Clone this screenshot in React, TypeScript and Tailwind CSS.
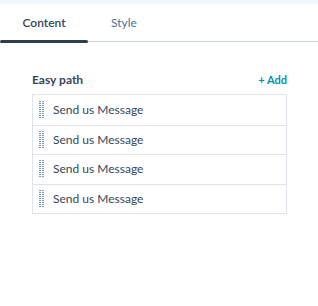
import React from "react";

const Handle = () => (
  <svg width="5" height="18" viewBox="0 0 5 18" className="shrink-0">
    {Array.from({ length: 9 }).map((_, i) => (
      <g key={i}>
        <rect x="0" y={i * 2} width="2" height="1" fill="#7c98b6" />
        <rect x="3" y={i * 2} width="2" height="1" fill="#7c98b6" />
      </g>
    ))}
  </svg>
);

export default function App() {
  const rows = ["Send us Message", "Send us Message", "Send us Message", "Send us Message"];
  return (
    <div className="w-[318px] h-[306px] bg-white overflow-hidden" style={{ fontFamily: "Lato, 'Noto Sans', sans-serif" }}>
      <div className="h-[4px] bg-[#f5f8fa]" />
      <div className="flex h-[38px] border-b border-[#cbd6e2] relative">
        <div className="w-[88px] flex items-center justify-center text-[12px] font-semibold text-[#33475b] relative pt-[1px]">
          Content
          <div className="absolute left-0 right-0 bottom-[-2px] h-[3px] bg-[#2d3e50] rounded-full" />
        </div>
        <div className="w-[72px] flex items-center justify-center text-[12px] text-[#516f90] pt-[1px]">Style</div>
      </div>
      <div className="pl-[32px] pt-[29px]">
        <div className="flex items-center justify-between w-[255px] h-[18px] mb-[5px]">
          <span className="text-[12px] font-bold text-[#33475b]">Easy path</span>
          <span className="text-[11px] font-bold text-[#0091ae]">+ Add</span>
        </div>
        <div className="w-[255px] border border-[#dfe3eb]">
          {rows.map((r, i) => (
            <div
              key={i}
              className={`flex items-center h-[29.5px] pl-[6px] gap-[9px] ${i > 0 ? "border-t border-[#dfe3eb]" : ""}`}
            >
              <Handle />
              <span className="text-[12px] text-[#33475b]">{r}</span>
            </div>
          ))}
        </div>
      </div>
    </div>
  );
}
